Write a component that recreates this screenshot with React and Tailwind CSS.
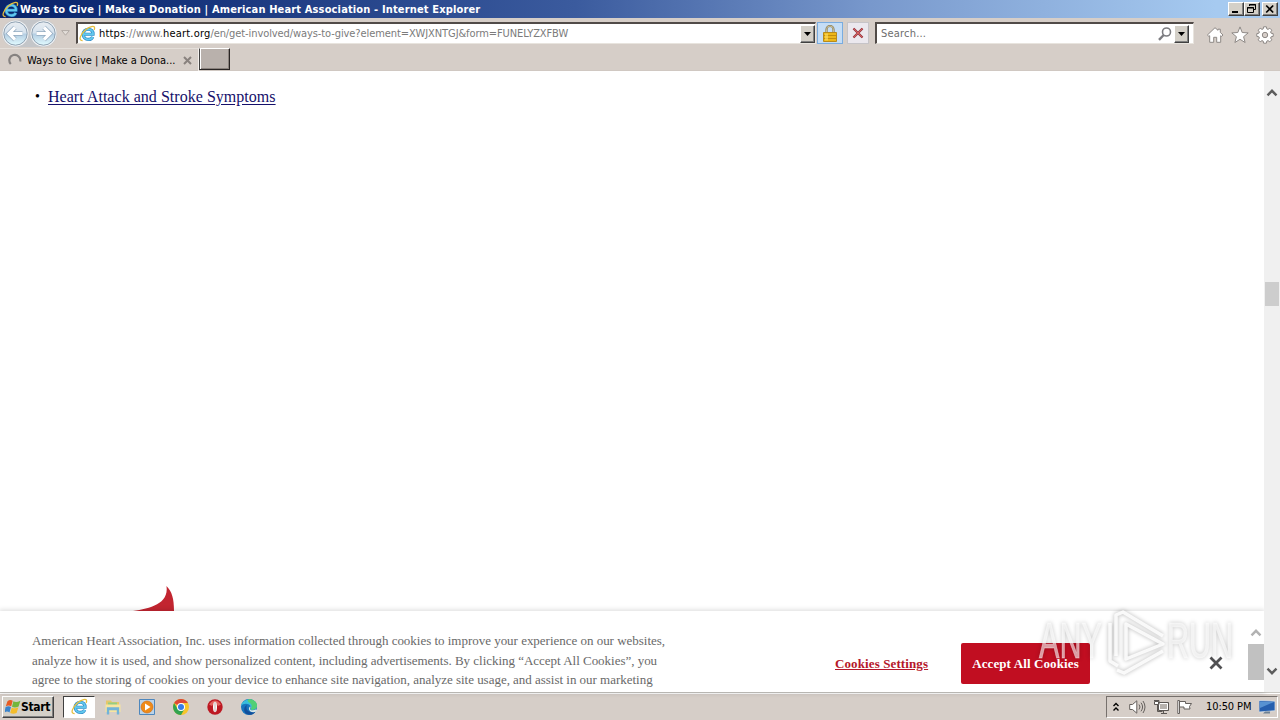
const raised =
  "border border-t-white border-l-white border-r-[#404040] border-b-[#404040] bg-[#d4d0c8] shadow-[inset_-1px_-1px_0_#808080]";

function IeLogo({ size = 16 }) {
  return (
    <svg width={size} height={size} viewBox="0 0 16 16" className="shrink-0">
      <path d="M4.4 8.7h8.8c.2-2.9-1.6-4.7-4.4-4.7S4 6 4 8.7s1.9 4.9 4.9 4.9c2 0 3.3-.8 4-2.5" fill="none" stroke="#2a86c4" strokeWidth="3" />
      <path d="M4.4 8.7h8.8c.2-2.9-1.6-4.7-4.4-4.7S4 6 4 8.7s1.9 4.9 4.9 4.9c2 0 3.3-.8 4-2.5" fill="none" stroke="#62c8ee" strokeWidth="1.8" />
      <path d="M3.4 14.6C-1 15 1.2 9 5.7 4.9 9.7 1.4 15 .1 14.7 3c-.1.7-.3 1.2-.5 1.6" fill="none" stroke="#e5bd3d" strokeWidth="1.2" />
    </svg>
  );
}

function ArrowButton({ flip = false }) {
  return (
    <svg width="27" height="27" viewBox="0 0 27 27" className={flip ? "scale-x-[-1]" : ""}>
      <defs>
        <linearGradient id="orb" x1="0" y1="0" x2="0" y2="1">
          <stop offset="0" stopColor="#e8edf2" />
          <stop offset=".48" stopColor="#d5e2ed" />
          <stop offset=".52" stopColor="#b3cde2" />
          <stop offset="1" stopColor="#e2fbff" />
        </linearGradient>
      </defs>
      <circle cx="13.5" cy="13.5" r="13" fill="#f3f5f7" />
      <circle cx="13.5" cy="13.5" r="11.7" fill="url(#orb)" stroke="#8da0b1" />
      <path d="M13 7.5l-6 6 6 6M7.5 13.5h13" fill="none" stroke="#92aac0" strokeWidth="4.6" />
      <path d="M13 7.5l-6 6 6 6M7.5 13.5h13" fill="none" stroke="#fff" strokeWidth="3.2" />
    </svg>
  );
}

function DropButton() {
  return (
    <div className={`flex h-[18px] w-[15px] shrink-0 items-center justify-center ${raised}`}>
      <svg width="7" height="4" viewBox="0 0 7 4">
        <path d="M0 0h7L3.5 4z" fill="#000" />
      </svg>
    </div>
  );
}

function TitleBar() {
  return (
    <div className="flex h-[18px] items-center bg-[linear-gradient(90deg,#0a246a_0%,#0e2b74_8%,#3b5b9e_45%,#7898cc_68%,#a6caf0_95%)] pl-[2px] pr-[2px]">
      <IeLogo size={17} />
      <span className="ml-px whitespace-nowrap pt-[2px] text-[11px] font-bold leading-[16px] tracking-[0.145px] text-white">
        Ways to Give | Make a Donation | American Heart Association - Internet Explorer
      </span>
      <div className="ml-auto flex">
        <div className={`h-[14px] w-4 ${raised}`}>
          <svg width="14" height="12" viewBox="0 0 14 12"><path d="M3 8h6v2H3z" /></svg>
        </div>
        <div className={`h-[14px] w-4 ${raised}`}>
          <svg width="14" height="12" viewBox="0 0 14 12">
            <path d="M4.5 3V1.5h6v5H8.5M4 2h7M2.5 4.5h6v5h-6zM2 5h7" fill="none" stroke="#000" />
          </svg>
        </div>
        <div className={`ml-[2px] h-[14px] w-4 ${raised}`}>
          <svg width="14" height="12" viewBox="0 0 14 12">
            <path d="M3.2 2.5l7 7M10.2 2.5l-7 7" stroke="#000" strokeWidth="1.7" />
          </svg>
        </div>
      </div>
    </div>
  );
}

function Toolbar() {
  const field =
    "flex h-[22px] items-center border-t-2 border-l-2 border-b border-r border-t-[#514b48] border-l-[#514b48] border-b-[#e8e4de] border-r-[#e8e4de] bg-white";
  return (
    <div className="flex h-[30px] items-center pl-[2px]">
      <div className="flex gap-px rounded-full bg-[#c4c6c9]">
        <ArrowButton />
        <ArrowButton flip />
      </div>
      <svg width="9" height="6" viewBox="0 0 9 6" className="ml-1">
        <path d="M.7.6h7.6L4.5 5.2z" fill="#e3ded9" stroke="#b1aaa5" />
      </svg>
      <div className={`ml-[6px] w-[740px] ${field}`}>
        <div className="ml-px"><IeLogo size={17} /></div>
        <span className="ml-[3px] whitespace-nowrap pt-[2px] text-[11px] tracking-[-0.09px] text-[#7b7b7b]">
          <span className="tracking-[0.18px]"><span className="text-black">https</span>://www.<span className="text-black">heart.org</span></span>
          /en/get-involved/ways-to-give?element=XWJXNTGJ&amp;form=FUNELYZXFBW
        </span>
        <div className="ml-auto"><DropButton /></div>
      </div>
      <div className="ml-px flex h-[22px] w-[26px] items-center justify-center border border-[#79ace0] bg-[#c5ddf5]">
        <svg width="14" height="17" viewBox="0 0 14 17">
          <path d="M3.5 8V4.5a3.5 3.5 0 017 0V8" fill="none" stroke="#8b7e56" strokeWidth="2.2" />
          <path d="M3.5 8V4.5a3.5 3.5 0 017 0V8" fill="none" stroke="#d5cda8" strokeWidth=".8" />
          <path d="M.5 7.5h13v9H.5z" fill="#edb718" stroke="#b78a1b" />
          <path d="M1 10.500h12M1 13.500h12" stroke="#c38e0c" />
          <path d="M2 8.500h3v7H2z" fill="#ffe16a" opacity=".6" />
        </svg>
      </div>
      <div className="ml-1 flex h-[22px] w-[22px] items-center justify-center border border-[#c6c4c8] bg-[#ebe8ee]">
        <svg width="12" height="12" viewBox="0 0 12 12">
          <path d="M1.5 1.5l9 9M10.5 1.5l-9 9" stroke="#963a43" strokeWidth="2.3" />
          <path d="M1.5 1.5l9 9M10.5 1.5l-9 9" stroke="#d75d5d" strokeWidth="1" />
        </svg>
      </div>
      <div className={`ml-[6px] w-[319px] ${field}`}>
        <span className="ml-[4px] pt-[2px] text-[11px] tracking-[0.2px] text-[#6d6d6d]">Search...</span>
        <svg width="14" height="14" viewBox="0 0 14 14" className="ml-auto">
          <circle cx="8.5" cy="5" r="4" fill="none" stroke="#7c7c80" strokeWidth="1.6" />
          <path d="M5.7 8L1 12.8" stroke="#7c7c80" strokeWidth="2.4" />
        </svg>
        <div className="ml-[2px] mr-[4px]"><DropButton /></div>
      </div>
      <div className="ml-[12px] mt-1 flex gap-[7px]">
        <svg width="18" height="18" viewBox="0 0 18 18" fill="#fff" stroke="#8e8986">
          <path d="M9 1.7L1.4 9l1.5 1.4.8-.7v6.6h4v-5h3v5h4V9.7l.8.7L17 9l-2.7-2.6V3.2H12v1.1z" />
        </svg>
        <svg width="18" height="18" viewBox="0 0 18 18" fill="#fff" stroke="#8e8986">
          <path d="M9 .9l2.2 5.6 6 .4-4.6 3.8 1.5 5.8L9 13.3l-5.1 3.2 1.5-5.8L.8 6.9l6-.4z" />
        </svg>
        <svg width="18" height="18" viewBox="0 0 18 18" fill="#fff" stroke="#8e8986">
          <path d="M7.6.8h2.8l.4 2.1 1.2.5 1.8-1.2 2 2-1.2 1.8.5 1.2 2.1.4v2.8l-2.1.4-.5 1.2 1.2 1.8-2 2-1.8-1.2-1.2.5-.4 2.1H7.6l-.4-2.1-1.2-.5-1.8 1.2-2-2L3.4 12l-.5-1.2-2.1-.4V7.6l2.1-.4L3.4 6 2.2 4.2l2-2L6 3.4l1.2-.5z" />
          <circle cx="9" cy="9" r="2.7" fill="#d6cec9" />
        </svg>
      </div>
    </div>
  );
}

function TabStrip() {
  return (
    <div className="flex h-[23px] items-start border-b border-[#d0c8c2]">
      <div className="flex h-[23px] w-[199px] items-center border-t border-r border-t-[#e4dfda] border-r-[#f4f0ed] pl-2">
        <svg width="14" height="14" viewBox="0 0 13 13" className="shrink-0">
          <path d="M2.6 10.3A5.1 5.1 0 1111.3 8" fill="none" stroke="#868280" strokeWidth="2" />
        </svg>
        <span className="ml-[5px] whitespace-nowrap pt-[2px] text-[11px] tracking-[0.01px] text-black">Ways to Give | Make a Dona...</span>
        <svg width="9" height="9" viewBox="0 0 9 9" className="ml-2 mt-px shrink-0">
          <path d="M1 1l7 7M8 1L1 8" stroke="#89827e" strokeWidth="2" />
        </svg>
      </div>
      <div className="h-[22px] w-[31px] border border-t-white border-l-[#404040] border-r-[#292524] border-b-[#292524] bg-[#b9b1ac] shadow-[inset_1px_0_0_#fff,inset_-1px_-1px_0_#8a827d]" />
    </div>
  );
}

function Chevron({ down = false, color = "#5d5d5d" }) {
  return (
    <svg width="12" height="10" viewBox="0 0 12 10" className={down ? "rotate-180" : ""}>
      <path d="M1.5 7.3L6 2.8l4.5 4.5" fill="none" stroke={color} strokeWidth="2.4" />
    </svg>
  );
}

function CookieBanner() {
  return (
    <div className="relative flex h-[81px] bg-white shadow-[0_0_5px_1px_rgba(0,0,0,0.15)]">
      <p className="ml-8 mt-5 h-[61px] w-[660px] whitespace-nowrap font-['Liberation_Serif',serif] text-[13px] leading-[19.5px] tracking-[-0.02px] text-[#696969]">
        American Heart Association, Inc. uses information collected through cookies to improve your experience on our websites,<br />
        analyze how it is used, and show personalized content, including advertisements. By clicking “Accept All Cookies”, you<br />
        agree to the storing of cookies on your device to enhance site navigation, analyze site usage, and assist in our marketing
      </p>
      <div className="ml-[143px] mt-8 flex h-[41px] items-center font-['Liberation_Serif',serif] text-[13px] font-bold tracking-[0.11px]">
        <a className="w-[93px] whitespace-nowrap text-[#b5172a] underline">Cookies Settings</a>
        <button className="ml-[33px] h-[41px] w-[129px] whitespace-nowrap rounded-[2px] bg-[#c10e21] text-white">Accept All Cookies</button>
        <svg width="14" height="14" viewBox="0 0 14 14" className="ml-[119px] mb-px">
          <path d="M1.5 1.5l11 11M12.5 1.5l-11 11" stroke="#505052" strokeWidth="2.8" />
        </svg>
      </div>
      <div className="ml-auto flex w-4 flex-col items-center pt-[17px]">
        <Chevron color="#b2b2b2" />
        <div className="mt-[6px] h-9 w-4 bg-[#c1c1c1]" />
      </div>
    </div>
  );
}

function Watermark() {
  return (
    <svg width="212" height="74" viewBox="0 0 212 74" className="absolute left-[1036px] top-[606px] drop-shadow-[0_0_2px_rgba(0,0,0,0.35)]">
      <g fill="#fff" fillOpacity=".6" stroke="#fff" strokeOpacity=".35" strokeWidth="1" fontFamily="Liberation Sans, sans-serif" fontSize="50">
        <text x="3" y="52" textLength="63" lengthAdjust="spacingAndGlyphs">ANY</text>
        <text x="131" y="52" textLength="66" lengthAdjust="spacingAndGlyphs">RUN</text>
      </g>
      <g fill="none" stroke="#fff" strokeOpacity=".85" strokeWidth="3.5" strokeLinejoin="round">
        <path d="M74 17v38l8 5M80 50V9l7-3 40 24M90 53V18l37 20zM81 64l7 3 39-22" />
      </g>
    </svg>
  );
}

function Page() {
  return (
    <div className="flex h-[621px] bg-white">
      <div className="flex w-[1264px] flex-col">
        <ul className="mt-4 pl-[35px]">
          <li className="flex items-center font-['Liberation_Serif',serif] text-[16px] leading-5">
            <span className="w-[13px] text-[14px]">•</span>
            <a className="whitespace-nowrap tracking-[0.03px] text-[#15106b] underline underline-offset-2">Heart Attack and Stroke Symptoms</a>
          </li>
        </ul>
        <svg width="42" height="25" viewBox="0 0 42 25" className="ml-[133px] mt-auto">
          <path d="M33.5 0C39 6 41 12 41 25H0C17 22.5 36 18 33.5 0z" fill="#c22530" />
        </svg>
        <CookieBanner />
      </div>
      <div className="relative flex w-4 flex-col items-center bg-[#f0f0f0] pt-[17px] pb-4">
        <Chevron />
        <div className="mt-[184px] h-6 w-[14px] bg-[#cdcdcd]" />
        <div className="mt-auto flex"><Chevron down /></div>
      </div>
    </div>
  );
}

function Taskbar() {
  return (
    <div className="flex h-7 items-center border-t border-[#c9c7c2] pl-[2px] pr-[2px] shadow-[inset_0_1px_0_#fff]">
      <div className={`flex h-[22px] w-[52px] items-center pl-[2px] ${raised}`}>
        <svg width="16" height="16" viewBox="0 0 16 16" className="shrink-0">
          <path d="M2.5 2.2Q5 .2 7.7 1.7L6.2 7.2Q3.5 5.6.8 7.2z" fill="#e75b22" />
          <path d="M8.4 2.2Q11 4 15.4 1.8l-1.8 5.7Q10 9.3 7 7.7z" fill="#73b63b" />
          <path d="M.6 8Q3.5 6.5 6 8L4.5 13.5Q2 11.7-.6 13.5z" fill="#3a83cb" />
          <path d="M6.8 8.5Q10 10.3 13.4 8.3l-1.8 5.6Q8.5 15.5 5.2 14z" fill="#f4bd2c" />
        </svg>
        <span className="text-[12px] font-bold tracking-[-0.35px] text-black">Start</span>
      </div>
      <div className="ml-[9px] flex h-[22px] w-8 items-center justify-center border border-t-[#404040] border-l-[#404040] border-r-white border-b-white bg-white">
        <IeLogo size={17} />
      </div>
      <svg width="16" height="16" viewBox="0 0 16 16" className="ml-[10px]">
        <path d="M1 1.5h5l1 1.5h7v10H1z" fill="#e5c86a" />
        <path d="M3 3.5h9v5H3z" fill="#95cd81" />
        <path d="M.5 5.5h15V13H.5z" fill="#f7e5a0" />
        <path d="M3 15.500v-6h10v6M3 10h10" fill="none" stroke="#72b4d8" strokeWidth="2.4" />
      </svg>
      <svg width="16" height="16" viewBox="0 0 16 16" className="ml-[18px]">
        <path d="M.5.5h15v15H.5z" fill="#bbd3e8" stroke="#4e87bd" />
        <circle cx="8" cy="8" r="6" fill="#ef8a18" stroke="#cf6a13" strokeWidth=".6" />
        <path d="M6 4.4v7.2L11.5 8z" fill="#fff" />
      </svg>
      <svg width="16" height="16" viewBox="0 0 16 16" className="ml-[18px]">
        <circle cx="8" cy="8" r="8" fill="#f7c52b" />
        <path d="M8 8L1.1 4A8 8 0 0114.9 4H8z" fill="#dc4837" />
        <path d="M1.1 4A8 8 0 008 16l3.5-6.1L8 11 4.6 9.9z" fill="#32a350" />
        <circle cx="8" cy="8" r="4" fill="#fff" />
        <circle cx="8" cy="8" r="3" fill="#367de8" />
      </svg>
      <svg width="16" height="16" viewBox="0 0 16 16" className="ml-[18px]">
        <circle cx="8" cy="8" r="7.7" fill="#bd1822" />
        <path d="M2 5.5Q8-2.5 14 5.5L11 7Q8 1 5 7z" fill="#e4625e" />
        <ellipse cx="8" cy="8" rx="2" ry="5.2" fill="#fff" />
        <path d="M8 3v10" stroke="#c5b0ac" />
      </svg>
      <svg width="16" height="16" viewBox="0 0 16 16" className="ml-[18px]">
        <circle cx="8" cy="8" r="8" fill="#1674bd" />
        <path d="M0 7C1 0 11-2 14.9 4 18 9 13 12 9.5 10.5 8.6 10 11 9 9.5 7 7 3.5 2 4.5 0 7z" fill="#38bddc" />
        <path d="M9 0c6 1 9 6 6 9.3-2 2-5 1.8-5.8.8 2.2-1 2-5-.7-6.3C6 2.2 6 .5 9 0z" fill="#52cf76" />
        <path d="M6 6c-2 4 1 8 8 7.2C11 17 5 16.5 3.5 12.5 2.5 9.5 4 7 6 6z" fill="#124f9b" />
        <path d="M9.2 7.2c1 1.7-.8 2.3 0 3.2 1.2 1.3 4 1 5.8-.1l1 1.5-2 1.2C9 14 6 10 9.2 7.2z" fill="#d9e6e5" />
      </svg>
      <div className="ml-auto flex h-[22px] items-center border border-t-[#77716d] border-l-[#77716d] border-r-white border-b-white pl-[5px]">
        <svg width="8" height="10" viewBox="0 0 8 10" fill="none" stroke="#000" strokeWidth="1.4">
          <path d="M1.5 4L4 1.5 6.5 4M1.5 8.5L4 6l2.5 2.5" />
        </svg>
        <svg width="17" height="16" viewBox="0 0 17 16" className="ml-[9px]" fill="#fff" stroke="#65605d">
          <path d="M.7 5.5H3.5L7.8 1.8v12.4L3.5 10.5H.7z" />
          <path d="M10 5.5q2 2.5 0 5M12 3.7q3.2 4.3 0 8.6M14 2q4 6 0 12" fill="none" />
        </svg>
        <svg width="17" height="16" viewBox="0 0 17 16" className="ml-[7px]" fill="none" stroke="#5b5653">
          <path d="M5.5 3.5h10v8h-10z" fill="#b7b2ae" stroke="#5b5653" />
          <path d="M6.5 4.5h8v6h-8z" stroke="#fff" />
          <path d="M8 14.5h6M10.5 12v2M1 1.5h5v4H4.5v7h5M2.5 1v3M4.5 1v3" />
          <path d="M1.5 2.5h4v3h-4z" fill="#fff" />
        </svg>
        <svg width="17" height="16" viewBox="0 0 17 16" className="ml-[7px]" fill="#fff" stroke="#65605d">
          <path d="M2.5 2.5h6v2h6l-2 3 .5 2.5h-6v-2h-4.5zM.8 1.5h1.7v13H.8z" />
        </svg>
        <span className="ml-[12px] w-[46px] whitespace-nowrap pt-[2px] text-[11px] tracking-[-0.1px] text-black">10:50 PM</span>
        <svg width="16" height="14" viewBox="0 0 16 14" className="ml-[7px] mr-[2px]">
          <path d="M0 .5l16 .7v9.5L0 12z" fill="#265fae" stroke="#dce7ef" strokeWidth=".7" />
          <path d="M1 1.5l14 .5L1 8z" fill="#5792d2" />
          <path d="M6 11.5h5v2H4z" fill="#6f8194" />
        </svg>
      </div>
    </div>
  );
}

export default function App() {
  return (
    <div className="relative h-[720px] w-[1280px] overflow-hidden bg-[#d6cec8] font-['DejaVu_Sans_Condensed','DejaVu_Sans',sans-serif] [font-stretch:condensed]">
      <TitleBar />
      <Toolbar />
      <TabStrip />
      <Page />
      <Taskbar />
      <Watermark />
    </div>
  );
}
